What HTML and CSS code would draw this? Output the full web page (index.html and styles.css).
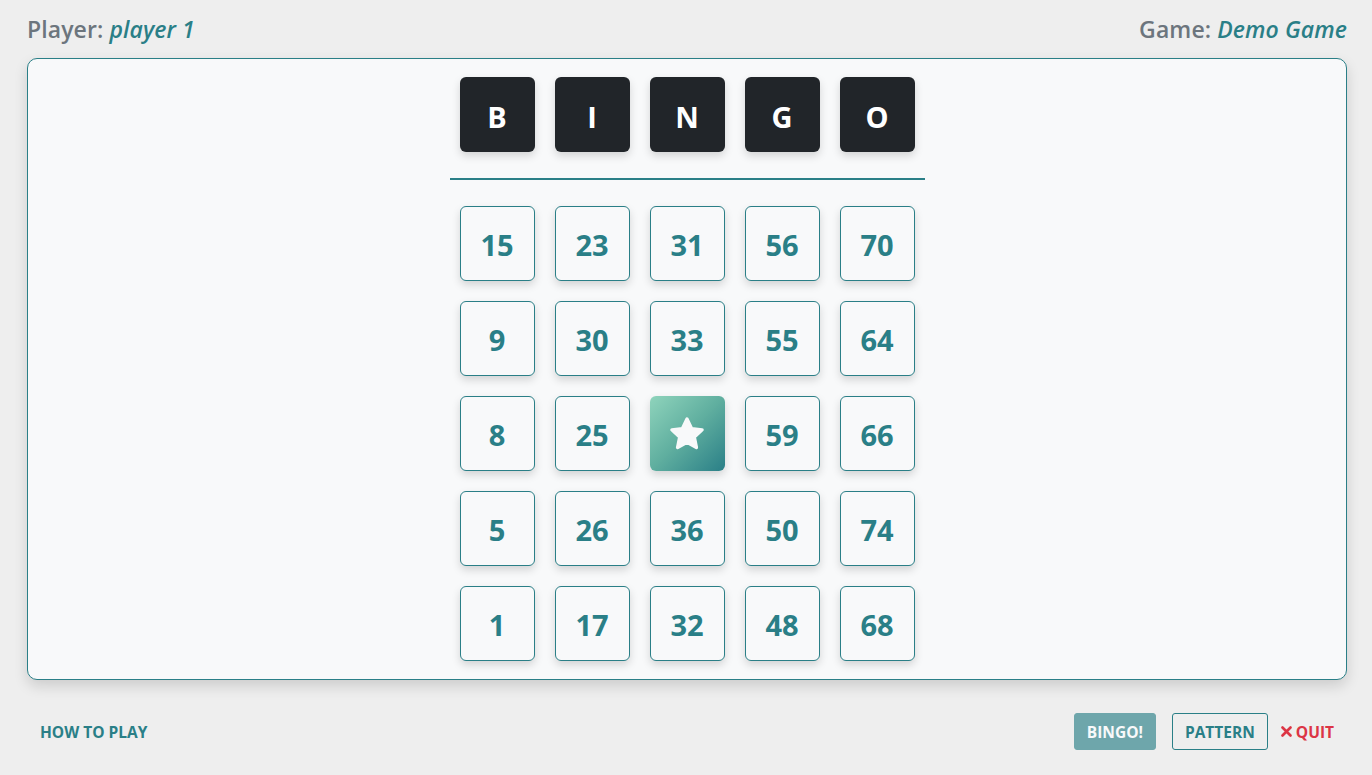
FILE: index.html
```html
<!DOCTYPE html>
<html lang="en">
<head>
<meta charset="utf-8">
<title>Bingo</title>
<link rel="stylesheet" href="styles.css">
</head>
<body>
<div class="page">
  <header class="topbar">
    <div class="meta">Player: <em>player 1</em></div>
    <div class="meta">Game: <em>Demo Game</em></div>
  </header>
  <main class="card">
    <div class="board">
      <div class="letters">
        <div class="letter">B</div>
        <div class="letter">I</div>
        <div class="letter">N</div>
        <div class="letter">G</div>
        <div class="letter">O</div>
      </div>
      <hr class="divider">
      <div class="grid">
        <div class="cell">15</div><div class="cell">23</div><div class="cell">31</div><div class="cell">56</div><div class="cell">70</div>
        <div class="cell">9</div><div class="cell">30</div><div class="cell">33</div><div class="cell">55</div><div class="cell">64</div>
        <div class="cell">8</div><div class="cell">25</div>
        <div class="cell free">
          <svg width="40" height="40" viewBox="0 0 36 36" aria-hidden="true"><path d="M18 4.5 L22.2 13.2 L31.6 14.3 L24.6 20.8 L26.5 30.2 L18 25.5 L9.5 30.2 L11.4 20.8 L4.4 14.3 L13.8 13.2 Z" fill="#f8f9fa" stroke="#f8f9fa" stroke-width="3" stroke-linejoin="round"/></svg>
        </div>
        <div class="cell">59</div><div class="cell">66</div>
        <div class="cell">5</div><div class="cell">26</div><div class="cell">36</div><div class="cell">50</div><div class="cell">74</div>
        <div class="cell">1</div><div class="cell">17</div><div class="cell">32</div><div class="cell">48</div><div class="cell">68</div>
      </div>
    </div>
  </main>
  <footer class="footer">
    <button class="link-btn">How to play</button>
    <div class="actions">
      <button class="btn btn-bingo">Bingo!</button>
      <button class="btn btn-outline">Pattern</button>
      <button class="link-btn quit"><svg class="x-icon" width="11" height="11" viewBox="0 0 11 11" aria-hidden="true"><path d="M1.5 1.5 L9.5 9.5 M9.5 1.5 L1.5 9.5" stroke="#dc3545" stroke-width="2.6" stroke-linecap="round"/></svg>Quit</button>
    </div>
  </footer>
</div>
</body>
</html>
```
FILE: styles.css
```css
* { box-sizing: border-box; }
html, body { margin: 0; padding: 0; }
body {
  background: #eeeeee;
  font-family: "Open Sans", "Noto Sans", sans-serif;
  color: #6c757d;
}
.page {
  padding: 0 25px 0 27px;
  width: 1372px;
  height: 775px;
}
.topbar {
  height: 58px;
  display: flex;
  justify-content: space-between;
  align-items: center;
}
.meta {
  font-size: 23px;
  font-weight: 600;
  color: #6c757d;
  letter-spacing: 0.1px;
}
.meta em {
  color: #2a7f87;
  font-style: italic;
}
.card {
  width: 1320px;
  height: 622px;
  background: #f8f9fa;
  border: 1px solid #2a7f87;
  border-radius: 10px;
  box-shadow: 0 6px 14px rgba(0,0,0,0.14);
  display: flex;
  justify-content: center;
  padding-top: 18px;
}
.board {
  width: 475px;
  display: flex;
  flex-direction: column;
  align-items: center;
}
.letters, .grid {
  display: grid;
  grid-template-columns: repeat(5, 75px);
  gap: 20px;
}
.letter {
  width: 75px;
  height: 75px;
  background: #212529;
  color: #ffffff;
  border-radius: 6px;
  display: flex;
  align-items: center;
  justify-content: center;
  font-size: 29px;
  font-weight: 700;
  padding-top: 3px;
  box-shadow: 0 4px 8px rgba(0,0,0,0.15);
}
.divider {
  width: 475px;
  margin: 26px 0 26px 0;
  border: none;
  border-top: 2px solid #2a7f87;
  height: 0;
}
.cell {
  width: 75px;
  height: 75px;
  background: #f8f9fa;
  border: 1px solid #2a7f87;
  border-radius: 6px;
  display: flex;
  align-items: center;
  justify-content: center;
  font-size: 29px;
  font-weight: 700;
  color: #2a7f87;
  padding-top: 2px;
  box-shadow: 0 4px 8px rgba(0,0,0,0.15);
}
.cell.free {
  border: none;
  padding-top: 0;
  background: linear-gradient(135deg, #8fd4bc 0%, #5fae9f 50%, #2a7f87 100%);
}
.footer {
  height: 95px;
  display: flex;
  justify-content: space-between;
  align-items: center;
  padding: 8px 13px 0 13px;
}
.actions {
  display: flex;
  align-items: center;
  gap: 16px;
}
button {
  font-family: "Open Sans", "Noto Sans", sans-serif;
  font-weight: 700;
  font-size: 15.5px;
  text-transform: uppercase;
  cursor: pointer;
}
.link-btn {
  background: none;
  border: none;
  color: #2a7f87;
  padding: 0;
}
.quit {
  color: #dc3545;
  margin-left: -3px;
  display: flex;
  align-items: center;
  gap: 4px;
}
.btn {
  height: 37px;
  border-radius: 3px;
  padding: 0 12px;
}
.btn-bingo {
  background: #6ea6ab;
  border: 1px solid #6ea6ab;
  color: #f8f9fa;
}
.btn-outline {
  background: transparent;
  border: 1px solid #2a7f87;
  color: #2a7f87;
}
```
